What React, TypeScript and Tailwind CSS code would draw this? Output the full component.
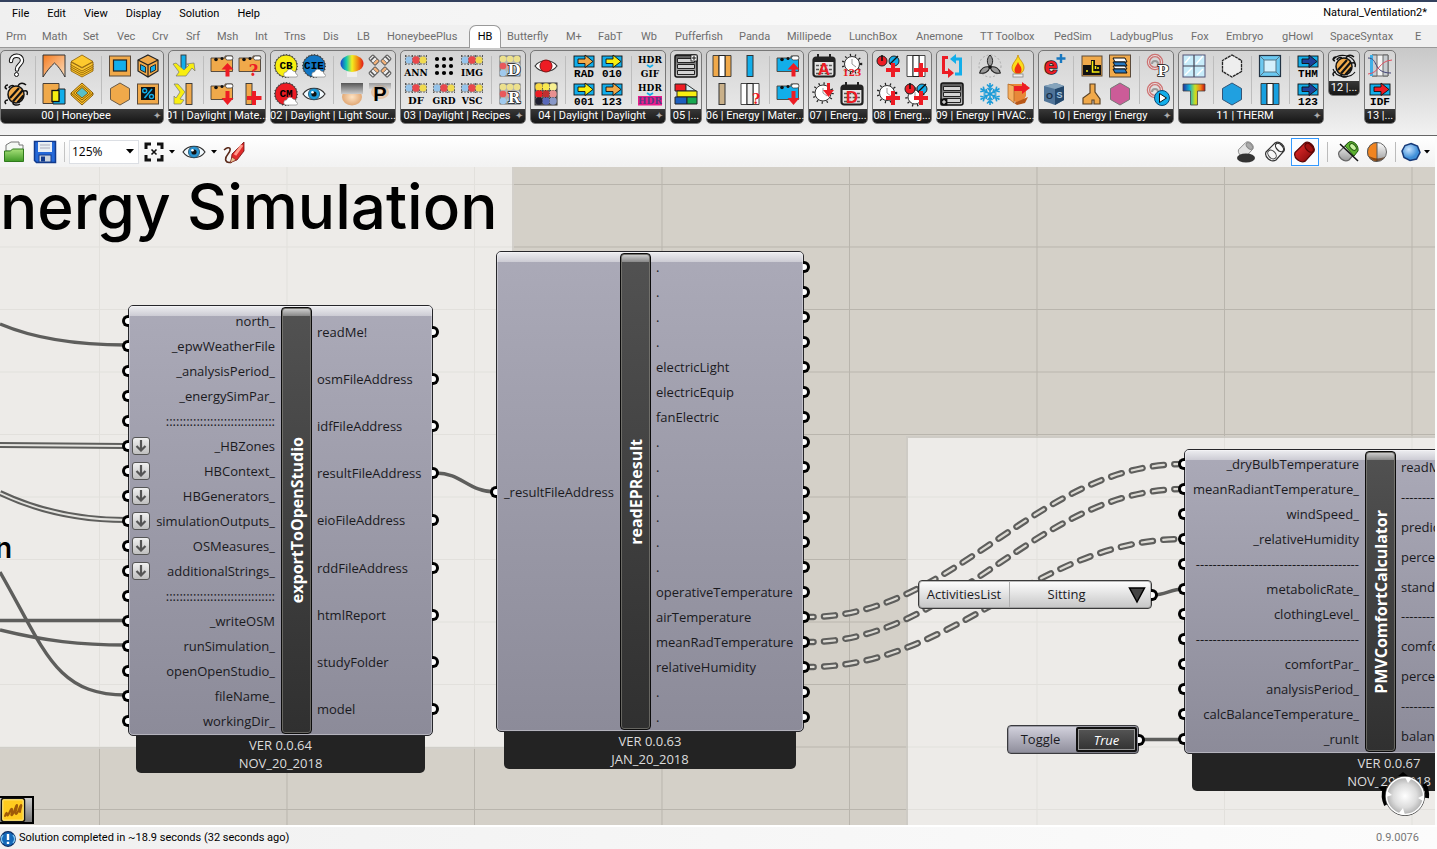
import React from "react";

const ORANGE = "#f0a94a";
const BLUE = "#12aeea";
const RED = "#ed1c24";
const YELLOW = "#f8ee10";
const SERIF = "'DejaVu Serif', serif";
const MONO = "'Liberation Mono', monospace";
const SANS = "'Liberation Sans', sans-serif";

function T({ x = 12, y, s = 9, fill = "#000", children, stroke, anchor = "middle", font = SERIF }: any) {
  return (
    <text x={x} y={y} fontSize={s} fontWeight="bold" fontFamily={font} textAnchor={anchor} fill={fill} stroke={stroke} strokeWidth={stroke ? 1.6 : undefined} paintOrder="stroke">
      {children}
    </text>
  );
}

function Defs() {
  return (
    <svg width="0" height="0" className="absolute" aria-hidden="true">
      <defs>
        <linearGradient id="rainbow">
          <stop offset="0" stopColor="#1a3fd0" /><stop offset=".25" stopColor="#10c8b0" /><stop offset=".5" stopColor="#f4ee20" /><stop offset=".75" stopColor="#f08a10" /><stop offset="1" stopColor="#e01818" />
        </linearGradient>
        <linearGradient id="therm">
          <stop offset="0" stopColor="#2030a0" /><stop offset=".3" stopColor="#10b0d0" /><stop offset=".55" stopColor="#c8e020" /><stop offset=".8" stopColor="#f48018" /><stop offset="1" stopColor="#c01010" />
        </linearGradient>
        <linearGradient id="steel" x2="0" y2="1">
          <stop offset="0" stopColor="#555" /><stop offset="1" stopColor="#ccc" />
        </linearGradient>
        <linearGradient id="grey" x2="0" y2="1">
          <stop offset="0" stopColor="#fff" /><stop offset="1" stopColor="#9a9a9a" />
        </linearGradient>
        <linearGradient id="orangeG" x2="1" y2="1">
          <stop offset="0" stopColor="#f47b20" /><stop offset="1" stopColor="#fde0c0" />
        </linearGradient>
        <linearGradient id="redG" x2="1" y2="1">
          <stop offset="0" stopColor="#f03030" /><stop offset="1" stopColor="#7a0606" />
        </linearGradient>
        <linearGradient id="greenG" x2="0" y2="1">
          <stop offset="0" stopColor="#a8e07a" /><stop offset="1" stopColor="#3f9a26" />
        </linearGradient>
        <radialGradient id="skin"><stop offset="0" stopColor="#fde3c4" /><stop offset="1" stopColor="#e2a976" /></radialGradient>
        <radialGradient id="ball" cx=".38" cy=".35"><stop offset="0" stopColor="#c8e4ff" /><stop offset="1" stopColor="#3f8fd8" /></radialGradient>
        <radialGradient id="dial"><stop offset="0" stopColor="#fff" /><stop offset=".6" stopColor="#dcdcdc" /><stop offset="1" stopColor="#aaa" /></radialGradient>
      </defs>
    </svg>
  );
}

const Cloud = () => <path d="M12 23a2.500 2.500 0 0 1 .5-5 3.500 3.500 0 0 1 6.500-1 3 3 0 0 1 3 3 1.500 1.500 0 0 1 0 3z" fill="#fff" stroke="#777" strokeWidth=".6" />;

function Disc({ fill, label, s = 11 }: { fill: string; label: string; s?: number }) {
  return (
    <>
      <circle cx="12" cy="12" r="11" fill={fill} stroke="#333" strokeWidth=".8" />
      <circle cx="12" cy="12" r="11.500" fill="none" stroke="#222" strokeWidth="1" strokeDasharray="1 2" />
      <Cloud />
      <T y="15" s={s} font={MONO}>{label}</T>
    </>
  );
}

function Sensors({ label }: { label?: string }) {
  return (
    <>
      <rect x="1.500" y="2" width="21" height="8" fill="#b8b8b8" />
      <path d="M1 2h22M1 10h22M1.500 1v10M8.500 1v10M15.500 1v10M22.500 1v10" stroke="#444" strokeWidth=".8" strokeDasharray="2 1" />
      <circle cx="5" cy="6" r="3.500" fill="#96c4ea" /><circle cx="12" cy="6" r="3.700" fill="#e8484c" /><circle cx="19" cy="6" r="3.500" fill="#f0da50" />
      {label && <T y="21.500" s={label.length > 2 ? 9 : 10}>{label}</T>}
    </>
  );
}

function Letters({ label }: { label: string }) {
  return (
    <>
      <rect x="2" y="2" width="20" height="20" fill="#b4b4b0" stroke="#444" strokeWidth=".8" />
      {[5, 12, 19].map((x, i) => (
        <g key={x}>
          <circle cx={x} cy="5" r="3.300" fill="#ece08c" />
          <circle cx={x} cy="12" r="3.300" fill={["#e8585c", "#e8a0a0", "#ddd"][i]} />
          <circle cx={x} cy="19" r="3.300" fill="#a0caee" />
        </g>
      ))}
      <T x="16" y="21" s="15" fill="#fff" stroke="#222">{label}</T>
    </>
  );
}

function Flow({ arrow, label, box = BLUE }: { arrow: string; label: string; box?: string }) {
  return (
    <>
      <rect x="2" y="2" width="20" height="11" fill={box} stroke="#111" strokeWidth=".9" />
      <path d="M6 5h7V1l8 6.500-8 6v-4H6z" fill={arrow} stroke="#111" strokeWidth=".9" />
      <T y="22.500" s="11" font={MONO}>{label}</T>
    </>
  );
}

function Card({ fill, children }: { fill: string; children: React.ReactNode }) {
  return (
    <>
      <path d="M1 4h14V2h7.500v15.500H1z" fill={fill} stroke="#4a4036" strokeWidth=".9" />
      <circle cx="6" cy="5.500" r="1.800" fill="#111" /><circle cx="12" cy="4.500" r="1.500" fill="#111" /><rect x="15.500" y="2" width="7.500" height="4" rx="2" fill="#fff" stroke="#333" strokeWidth=".7" />
      {children}
    </>
  );
}

const Up = () => <path d="M15.500 22.500V15.500H11.500l6-6.500 6 6.500h-4v7z" fill={RED} />;
const Down = () => <path d="M15.500 9v7h-4l6 7 6-7h-4V9z" fill={RED} />;
const Plus = () => <path d="M15 9h4v5h5v4h-5v5h-4v-5h-5v-4h5z" fill={RED} />;

function Clock({ r = 8, cx = 11, cy = 11 }: { r?: number; cx?: number; cy?: number }) {
  return (
    <>
      <circle cx={cx} cy={cy} r={r + 1.5} fill="none" stroke="#222" strokeWidth="2.500" strokeDasharray="1.200 3.800" />
      <circle cx={cx} cy={cy} r={r} fill="#fff" stroke="#333" strokeWidth="1" />
      <path d={`M${cx} ${cy}v-5M${cx} ${cy}l4 3`} stroke="#999" strokeWidth="1" />
    </>
  );
}

function Calendar({ label }: { label: string }) {
  return (
    <>
      <rect x="1.500" y="3.500" width="21" height="19" rx="2.500" fill="#e4e4e4" stroke="#222" strokeWidth="2.200" />
      <path d="M2 4h20v4H2z" fill="#222" />
      <path d="M6 0v5M18 0v5" stroke="#222" strokeWidth="2" />
      <path d="M4 11.500h16M4 15.500h16M4 19.500h16" stroke="#555" strokeWidth="1.400" strokeDasharray="3 1.300" />
      <T y="20.500" s="17" fill={RED} font={SANS}>{label}</T>
    </>
  );
}

function List({ corner }: { corner: "tr" | "bl" }) {
  const top = corner === "tr";
  return (
    <>
      <rect x="1" y="1" width="22" height="22" rx="2" fill="url(#steel)" stroke="#111" strokeWidth="1.500" />
      <path d="M3.500 4.500h17v4h-17zM3.500 10.500h17v4h-17zM3.500 16.500h17v4h-17z" fill="#d4d4d4" stroke="#222" strokeWidth="1" />
      <rect x={top ? 17 : 1} y={top ? 1 : 17} width="6" height="6" fill={top ? "#fff" : "#111"} stroke="#111" strokeWidth=".8" />
      <path d={top ? "M20 2v4M18 4h4" : "M4 18v4M2 20h4"} stroke={top ? "#111" : "#fff"} />
    </>
  );
}

function Bee() {
  return (
    <>
      <ellipse cx="12" cy="12.500" rx="8" ry="8.500" fill={ORANGE} stroke="#111" strokeWidth="1.500" />
      <path d="M6 16l9-10M9 19.500L19 8M13.500 20.500l6-7" stroke="#111" strokeWidth="2.200" />
      <path d="M14 4c2-4 6-3 8-1M20 9c3-1 4 1 3 4M4 18c-3 0-4 2-2 4M9 21c0 2 4 3 7 1M3 7C0 6 1 3 4 3M5 6c0-2 3-3 5-2" fill="none" stroke="#111" strokeWidth="1.500" />
    </>
  );
}

const Eye = ({ iris }: { iris: string }) => (
  <>
    <path d="M1 12c5-7.500 17-7.500 22 0-5 7.500-17 7.500-22 0z" fill="#f4fbff" stroke="#333" strokeWidth="1.200" />
    <circle cx="12" cy="12" r="5.600" fill={iris} stroke="#24506a" strokeWidth=".8" /><circle cx="12" cy="12" r="2.600" fill="#111" /><circle cx="10.500" cy="10.300" r="1.300" fill="#fff" />
  </>
);

const HEX = "M12 1l9.500 5.500v11L12 23l-9.500-5.500v-11z";

const Swirl = () => (
  <>
    <circle cx="9" cy="8" r="6.500" fill="none" stroke="#c85050" strokeWidth="3.500" opacity=".75" />
    <circle cx="9" cy="8" r="6.500" fill="none" stroke="#e8e0e0" strokeWidth="1" /><path d="M6 10c0-4 6-4 6 0" fill="none" stroke="#999" strokeWidth="2" />
  </>
);

const Duo = () => (
  <>
    <circle cx="6" cy="7" r="5" fill={RED} stroke="#222" strokeWidth="1" /><path d="M6 1v6" stroke="#111" strokeWidth="1.500" />
    <circle cx="18" cy="7" r="5" fill={BLUE} stroke="#222" strokeWidth="1" /><path d="M14 10l8-8" stroke="#111" strokeWidth="1.200" />
  </>
);

const Columns = ({ a, b }: { a: string; b: string }) => (
  <>
    <path d="M3 1.500h6v21H3zM15 1.500h6v21h-6z" fill={a} stroke="#333" strokeWidth=".9" />
    <path d="M9 1.500h6v21H9z" fill={b} stroke="#222" strokeWidth="1" />
  </>
);

const icons: Record<string, React.ReactNode> = {
  Info: <><path d="M7 7c0-7 11-7 11-.5 0 4-5 4.500-5 9" fill="none" stroke="#111" strokeWidth="4.400" strokeLinecap="round" /><path d="M7 7c0-7 11-7 11-.5 0 4-5 4.500-5 9" fill="none" stroke="#fff" strokeWidth="2.400" strokeLinecap="round" /><circle cx="12.500" cy="20.500" r="2" fill="#fff" stroke="#111" /></>,
  Bee: <Bee />,
  Mass: <path d="M1 1h22v22C19 16 16 12 12.500 9 8 13 5 17 1 23z" fill="url(#orangeG)" stroke="#333" />,
  Zones: <><path d="M1 1.500h16v8h-6v12H1z" fill={ORANGE} stroke="#4a4036" /><path d="M16 7h7v15H11v-4h6V11h-1z" fill={BLUE} stroke="#222" /><rect x="10" y="8.500" width="7" height="11" fill={YELLOW} stroke="#111" strokeWidth="1.300" /></>,
  Floors: <>{[5, 3, 1, -1].map((o) => <path key={o} d={`M1 ${9 + o}l11 6 11-6v3l-11 6-11-6z`} fill="#f9c531" stroke="#8a5a00" strokeWidth=".8" />)}<path d="M1 7.500L12 1l11 6.500-11 6z" fill="#fdc92e" stroke="#8a5a00" strokeWidth=".8" /></>,
  Core: <><path d="M1 11L12 1l11 10v2L12 23 1 13z" fill="#fbbf28" stroke="#7a5000" strokeWidth=".9" /><path d="M1 11l11 9.500L23 11M3.500 11L12 3.500l8.500 7.500L12 18z" fill="none" stroke="#7a5000" strokeWidth=".9" /><path d="M6 11l6-5.500 6 5.500-6 5z" fill="#58c0c8" stroke="#7a5000" strokeWidth=".9" /></>,
  Glazing: <><rect x="1.500" y="2" width="21" height="20" fill={ORANGE} stroke="#5a4a3a" /><rect x="5.500" y="6" width="13" height="11" fill={BLUE} stroke="#222" strokeWidth="1.200" /></>,
  Surface: <path d={HEX} fill={ORANGE} stroke="#6a5a46" />,
  Zone: <><path d="M12 1l10 5v11l-10 6-10-6V6z" fill={ORANGE} stroke="#222" strokeWidth="1.200" /><path d="M2 6l10 5 10-5M12 11v12" fill="none" stroke="#222" strokeWidth="1.200" /><path d="M4.500 10.500l5 2.500v5.500l-5-2.500zM19.500 10.500l-5 2.500v5.500l5-2.500z" fill={BLUE} stroke="#222" strokeWidth=".9" /></>,
  Ratio: <><rect x="1.500" y="2" width="21" height="20" fill={ORANGE} stroke="#5a4a3a" /><rect x="5" y="5" width="14" height="13" fill="#111" /><path d="M8.500 16l7.500-9" stroke={BLUE} strokeWidth="1.600" /><circle cx="8.700" cy="8.700" r="2" fill="none" stroke={BLUE} strokeWidth="1.400" /><circle cx="15.500" cy="14.500" r="2" fill="none" stroke={BLUE} strokeWidth="1.400" /></>,
  Decompose: <><rect x="9" y="1" width="5" height="18" fill={BLUE} stroke="#333" strokeWidth=".9" /><path d="M1 10l3-1 8 7 5-5-3-1 8-1 1 8-3-3-6 8H4l3-4z" fill={YELLOW} stroke="#777" strokeWidth=".7" /></>,
  Bend: <><rect x="14" y="1.500" width="6" height="21" fill={ORANGE} stroke="#333" strokeWidth=".9" /><path d="M2 2h4l7 8-5 7 4 1-3 4H2v-8l2 2 4-6z" fill={YELLOW} stroke="#777" strokeWidth=".7" /></>,
  "Export material": <Card fill={ORANGE}><Up /></Card>,
  "Import material": <Card fill={ORANGE}><Down /></Card>,
  "Find material": <Card fill={ORANGE}><T x="15.500" y="22" s="16" fill={RED}>?</T></Card>,
  "Add material": <><rect x="8" y="1.500" width="6" height="21" fill={ORANGE} stroke="#333" strokeWidth=".9" /><path d="M14 9h4v5h5.500v4H18v5h-4v-5H9v-4h5z" fill={RED} /></>,
  CB: <Disc fill={YELLOW} label="CB" />,
  CM: <Disc fill={RED} label="CM" />,
  CIE: <Disc fill="#1176c4" label="CIE" />,
  View: <Eye iris="#1c9ad8" />,
  Dome: <><path d="M7 17h10v6H7z" fill="#eee" /><ellipse cx="12" cy="9.500" rx="11.500" ry="8.500" fill="url(#rainbow)" /></>,
  Sky: <><ellipse cx="12" cy="15" rx="10" ry="8.500" fill="url(#skin)" /><rect x="1" y="1" width="22" height="11" fill="url(#steel)" /></>,
  Lamps: <>{[45, 135, 225, 315].map((a) => <g key={a} transform={`rotate(${a} 12 12)`}><rect x="9" y="-1" width="6" height="9" rx="1" fill="#eee" stroke="#555" /><rect x="9" y="5" width="6" height="3" rx="1" fill="#f3b27a" stroke="#555" strokeWidth=".7" /><path d="M9 1.500h6" stroke="#555" strokeWidth="1.600" /></g>)}</>,
  Photometric: <><ellipse cx="12" cy="10" rx="9" ry="7" fill="url(#skin)" opacity=".6" /><rect x="1" y="1" width="22" height="6" fill="url(#steel)" opacity=".5" /><T y="19" s="20" font={SANS}>P</T></>,
  ANN: <Sensors label="ANN" />, DF: <Sensors label="DF" />, GRD: <Sensors label="GRD" />, IMG: <Sensors label="IMG" />, VSC: <Sensors label="VSC" />,
  Points: <>{[5, 12, 19].map((x) => [5, 12, 19].map((y) => <circle key={`${x}-${y}`} cx={x} cy={y} r="2.100" />))}</>,
  D: <Letters label="D" />, R: <Letters label="R" />,
  "Run daylight": <><path d="M1 12c5-7 17-7 22 0-5 7-17 7-22 0z" fill="#fff" stroke="#333" strokeWidth="1.200" /><circle cx="12" cy="12" r="6" fill={RED} stroke="#811" /></>,
  Results: <><rect x="1" y="1" width="22" height="22" fill="#777" stroke="#333" />{["#f8d840", "#f8e850", "#f8f090", "#ed1c24", "#c03030", "#e89090", "#202030", "#5868b8", "#8898c8"].map((c, i) => <circle key={i} cx={5 + (i % 3) * 7} cy={5 + Math.floor(i / 3) * 7} r="3.700" fill={c} />)}<path d="M1 8.500h22M1 15.500h22M8.500 1v22M15.500 1v22" stroke="#222" strokeWidth=".6" strokeDasharray="1 1.500" /></>,
  RAD: <Flow arrow={ORANGE} label="RAD" />, "001": <Flow arrow={YELLOW} label="001" />, "010": <Flow arrow={YELLOW} label="010" />, "123": <Flow arrow={ORANGE} label="123" />,
  "HDR to GIF": <><T y="9" s="9">HDR</T><path d="M9 11l3 2 3-2" stroke={BLUE} strokeWidth="1.800" fill="none" /><T y="22.500" s="9">GIF</T></>,
  "False color": <><T y="9" s="9">HDR</T><path d="M9 11l3 2 3-2" stroke={BLUE} strokeWidth="1.800" fill="none" /><rect x="0" y="14" width="24" height="9.500" fill="#ec1c8c" /><T y="22" s="9" fill="#5a3a80">HDR</T></>,
  Library: <List corner="tr" />,
  Types: <><path d="M1 2h11v7H1z" fill={RED} stroke="#222" /><path d="M12 2l10 7H12z" fill="#d8eef4" stroke="#333" /><path d="M3 9h20v6H3z" fill={YELLOW} stroke="#222" /><path d="M1 15h12v7H1z" fill="#1c5fc0" stroke="#222" /><path d="M13 15h10v7H13z" fill="#18a850" stroke="#222" /></>,
  Construction: <Columns a={ORANGE} b="#fff" />,
  "Air gap": <rect x="9" y="1.500" width="6" height="21" fill="#c9b089" stroke="#333" />,
  Window: <rect x="9" y="1.500" width="6" height="21" fill={BLUE} stroke="#333" />,
  Search: <><Columns a="#fff" b="#f0f0f0" /><T x="18" y="22" s="14" fill={RED}>?</T></>,
  "Export construction": <Card fill={BLUE}><Up /></Card>, "Import construction": <Card fill={BLUE}><Down /></Card>,
  Annual: <Calendar label="A" />, Daily: <Calendar label="D" />,
  Values: <><Clock r={7.5} cx={12} cy={10} /><T y="21.500" s="9" fill={RED}>123</T></>,
  "Pick time": <><Clock /><path d="M15 1h3v7h4l-5.500 7L11 8h4z" fill={RED} /></>,
  Loads: <><Duo /><Plus /></>, Schedule: <><Clock r={7.5} /><Plus /></>, Assembly: <><Columns a="#fff" b="#fff" /><Plus /></>, "Load schedule": <><Clock r={7} cx={11} cy={15} /><Duo /><Plus /></>,
  Loop: <><path d="M8 3.500H3.500v15H10" fill="none" stroke={RED} strokeWidth="3" /><path d="M8 14l6 5-6 5z" fill={RED} /><path d="M15 20h5.500V5H14" fill="none" stroke={BLUE} strokeWidth="3" /><path d="M16 0l-6 5 6 5z" fill={BLUE} /></>,
  Systems: <List corner="bl" />,
  Fan: <><circle cx="12" cy="12" r="11" fill="none" stroke="#aaa" strokeDasharray="2 2" />{[0, 120, 240].map((a) => <path key={a} transform={`rotate(${a} 12 13)`} d="M12 13c-4-4-3-9 0-12 3 3 4 8 0 12z" fill="#999" stroke="#222" />)}<circle cx="12" cy="13" r="1.800" fill="#111" /></>,
  Cooling: <g stroke="#1e9cd8" strokeWidth="1.600" fill="none">{[0, 60, 120, 180, 240, 300].map((a) => <path key={a} transform={`rotate(${a} 12 12)`} d="M12 12V1M9 2.500l3 3 3-3M9.500 6l2.500 2.500L14.500 6" />)}</g>,
  Heating: <><path d="M12 1c1 5 6 7 6 13a6 6 0 0 1-12 0c0-5 5-8 6-13z" fill="#fbdc1c" stroke="#c88a00" strokeWidth=".8" /><path d="M12 8c1 3 3.500 4 3.500 8a3.500 3.500 0 0 1-7 0c0-3 2.500-5 3.500-8z" fill="#f03010" /><rect x="7" y="20" width="10" height="3" fill="#eee" stroke="#888" strokeWidth=".8" /></>,
  Exhaust: <><path d="M2 2h18v12l-5 8-13-5z" fill="#e88838" /><path d="M2 2l6 2v17l-6-5z" fill="#f5b060" stroke="#a86020" strokeWidth=".7" /><path d="M8 4h8V0l8 6-8 6V9H8z" fill={RED} /><path d="M8 21l14-6-3 6-8 2z" fill="#b85818" /></>,
  EnergyPlus: <><T x="9" y="20" s="24" fill={RED} stroke="#222" font={SANS}>e</T><path d="M19 0v9M14.500 4.500h9" stroke="#1878c0" strokeWidth="2.400" /></>,
  OpenStudio: <><path d="M2 4l12-3 8 3v14l-9 5-11-4z" fill="#507498" /><path d="M13 7l9-3v14l-9 5z" fill="#24486c" /><path d="M2 4l12-3 8 3-9 3z" fill="#86a4bc" /><T x="7.500" y="17" s="9" fill="#182c44" font={SANS}>O</T><T x="17.500" y="16" s="9" fill="#a8c8e0" font={SANS}>S</T></>,
  Chart: <><rect x="2" y="2" width="20" height="20" fill={ORANGE} stroke="#5a4a3a" /><path d="M3 11h8V6h4v5h6v10H3z" fill="#111" /><path d="M12.500 7v11h7M7 16v2M15.500 12v3M18 13v2" stroke={YELLOW} strokeWidth="1.500" fill="none" /></>,
  Generator: <path d="M10 2h5v8l5 7v5h-6v-4h-2v4H3v-6l7-5z" fill={ORANGE} stroke="#5a4226" strokeWidth="1.200" />,
  Report: <><rect x="1.500" y="1" width="21" height="22" fill={ORANGE} stroke="#5a4a3a" /><path d="M5 4h12l2 4H7z" fill="#fff" stroke="#111" /><path d="M5 8h12l2 4H7z" fill="#2878c0" stroke="#111" /><path d="M5 12h12l2 3H7z" fill="#fff" stroke="#111" /><path d="M5 15h12l2 4H7z" fill="#2878c0" stroke="#111" /></>,
  Context: <path d={HEX} fill="#cc5c98" stroke="#777" />,
  Parameters: <><Swirl /><T x="17" y="22" s="15" fill="#fff" stroke="#111">P</T></>,
  Run: <><Swirl /><circle cx="16" cy="16" r="7.500" fill={BLUE} stroke="#0a4a78" /><path d="M13.500 11.500l7 4.500-7 4.500z" fill="#fff" stroke="#111" /></>,
  "Window grid": <><rect x="1" y="1" width="22" height="22" fill="#c8ecfa" stroke="#557" /><path d="M12 1v22M1 12h22" stroke="#445" strokeWidth="1.200" /><path d="M3 9l5-6M14 10l7-8M3 21l7-7M15 21l6-6" stroke="#fff" strokeWidth="1.400" /></>,
  Thermal: <path d="M1 2h22v7h-7.500v14h-7V9H1z" fill="url(#therm)" stroke="#444" strokeWidth=".8" />,
  Polygon: <path d={HEX} fill="#eee" stroke="#222" strokeWidth="1.300" strokeDasharray="3 .6" />,
  Material: <path d={HEX} fill="#20a0e0" stroke="#357" />,
  Frame: <><rect x="1.500" y="1.500" width="21" height="21" fill="#6cc8f0" stroke="#234" strokeWidth="1.200" /><rect x="6" y="6" width="12" height="12" fill="#d4f0fc" stroke="#578" /><path d="M2 2l4 4M22 2l-4 4M2 22l4-4M22 22l-4-4" stroke="#578" /></>,
  Spacer: <Columns a="#18a0e0" b="#fff" />,
  THM: <Flow arrow="#1c3f98" label="THM" />, "THM results": <Flow arrow="#1c3f98" label="123" />,
  Legacy: <><Bee /><path d="M1 6C6-1 20 0 23 9M23 18C18 25 4 24 1 15" fill="none" stroke="#111" strokeWidth="1.100" /></>,
  Compare: <><path d="M4 1h16v21H4z" fill="#f4f4f4" stroke="#666" /><path d="M4 1h5v21H4zM15 1h5v21h-5z" fill="#c8ccd0" stroke="#666" /><rect x="2" y="1" width="3" height="21" fill="#40b0e8" /><path d="M0 4c11 0 4 15 23 15" stroke="#447" fill="none" /><path d="M0 20c12-1 10-13 24-14" stroke="#e05060" fill="none" /></>,
  IDF: <Flow arrow={RED} label="IDF" />,
};

type Panel = { label: string; more?: boolean; groups: string[][][] };

const panels: Panel[] = [
  { label: "00 | Honeybee", more: true, groups: [[["Info", "Bee"]], [["Mass", "Zones"], ["Floors", "Core"]], [["Glazing", "Surface"], ["Zone", "Ratio"]]] },
  { label: "01 | Daylight | Mate...", groups: [[["Decompose", "Bend"]], [["Export material", "Import material"], ["Find material", "Add material"]]] },
  { label: "02 | Daylight | Light Sour...", groups: [[["CB", "CM"], ["CIE", "View"]], [["Dome", "Sky"], ["Lamps", "Photometric"]]] },
  { label: "03 | Daylight | Recipes", more: true, groups: [[["ANN", "DF"], ["Points", "GRD"], ["IMG", "VSC"]], [["D", "R"]]] },
  { label: "04 | Daylight | Daylight", more: true, groups: [[["Run daylight", "Results"]], [["RAD", "001"], ["010", "123"]], [["HDR to GIF", "False color"]]] },
  { label: "05 |...", groups: [[["Library", "Types"]]] },
  { label: "06 | Energy | Mater...", groups: [[["Construction", "Air gap"], ["Window", "Search"]], [["Export construction", "Import construction"]]] },
  { label: "07 | Energ...", groups: [[["Annual", "Pick time"], ["Values", "Daily"]]] },
  { label: "08 | Energ...", groups: [[["Loads", "Schedule"], ["Assembly", "Load schedule"]]] },
  { label: "09 | Energy | HVAC...", groups: [[["Loop", "Systems"]], [["Fan", "Cooling"], ["Heating", "Exhaust"]]] },
  { label: "10 | Energy | Energy", more: true, groups: [[["EnergyPlus", "OpenStudio"]], [["Chart", "Generator"], ["Report", "Context"]], [["Parameters", "Run"]]] },
  { label: "11 | THERM", more: true, groups: [[["Window grid", "Thermal"]], [["Polygon", "Material"]], [["Frame", "Spacer"]], [["THM", "THM results"]]] },
  { label: "12 |...", groups: [[["Legacy"]]] },
  { label: "13 |...", groups: [[["Compare", "IDF"]]] },
];

const tabs: [string, string][] = [
  ["Prm", "w-[36px]"], ["Math", "w-[41px]"], ["Set", "w-[34px]"], ["Vec", "w-[35px]"], ["Crv", "w-[34px]"], ["Srf", "w-[31px]"], ["Msh", "w-[38px]"], ["Int", "w-[29px]"], ["Trns", "w-[39px]"], ["Dis", "w-[34px]"], ["LB", "w-[30px]"], ["HoneybeePlus", "w-[88px]"],
  ["HB", "w-[32px]"], ["Butterfly", "w-[59px]"], ["M+", "w-[32px]"], ["FabT", "w-[43px]"], ["Wb", "w-[34px]"], ["Pufferfish", "w-[64px]"], ["Panda", "w-[48px]"], ["Millipede", "w-[62px]"], ["LunchBox", "w-[67px]"], ["Anemone", "w-[64px]"], ["TT Toolbox", "w-[74px]"], ["PedSim", "w-[56px]"],
  ["LadybugPlus", "w-[81px]"], ["Fox", "w-[35px]"], ["Embryo", "w-[56px]"], ["gHowl", "w-[48px]"], ["SpaceSyntax", "w-[85px]"], ["E", "w-[22px]"],
];

function RibbonPanel({ label, more, groups }: Panel) {
  return (
    <section className="flex shrink-0 flex-col rounded-[5px] border border-[#777] bg-linear-to-b from-[#d4d4d4] to-[#ececec]">
      <div className="flex p-px">
        {groups.map((cols, g) => (
          <React.Fragment key={g}>
            {g > 0 && <div className="my-1 flex w-[10px] justify-center"><div className="w-px bg-[#bdbdbd]" /></div>}
            {cols.map((col) => (
              <div key={col[0]} className="flex w-7 flex-col">
                {col.map((name) => (
                  <button key={name} aria-label={name} className="flex h-7 w-7 items-center justify-center">
                    <svg viewBox="0 0 24 24" className="h-6 w-6 overflow-visible">{icons[name]}</svg>
                  </button>
                ))}
              </div>
            ))}
          </React.Fragment>
        ))}
      </div>
      <div className="relative flex h-[14px] items-center justify-center rounded-b-[4px] bg-linear-to-b from-[#383838] to-[#161616] text-[11px] leading-[14px] whitespace-nowrap text-white">
        <span className={more ? "w-0 flex-1 text-center" : "flex w-0 justify-center"}>{label}</span>
        {more && <span className="w-3 text-center text-[10px] text-[#aaa]">✦</span>}
      </div>
    </section>
  );
}

const Tri = () => (
  <svg viewBox="0 0 6 4" className="h-1 w-1.5"><path d="M0 0h6L3 3.500z" /></svg>
);

function Cylinder({ fill, stroke, hole }: { fill: string; stroke: string; hole: string }) {
  return (
    <g stroke={stroke} strokeWidth="1.200">
      <path d="M2 12L11 3c4-3 11 3 9 8l-8 9c-5 3-12-3-10-8z" fill={fill} />
      <ellipse cx="15.500" cy="7.500" rx="3" ry="5" transform="rotate(-42 15.500 7.500)" fill={hole} />
    </g>
  );
}

function Tool({ label, children, className = "w-6" }: { label: string; children: React.ReactNode; className?: string }) {
  return (
    <button aria-label={label} className={`flex h-7 items-center justify-center ${className}`}>
      <svg viewBox="0 0 24 24" className="h-6 w-6 shrink-0">{children}</svg>
    </button>
  );
}

function Toolbar() {
  return (
    <div className="mr-[2px] flex h-[31px] shrink-0 items-center justify-between bg-linear-to-b from-white to-[#f2f2f2] pr-[2px] pl-[3px]">
      <div className="flex items-center">
        <Tool label="Open">
          <path d="M3 11V5l5-3h8v3h4v7z" fill="#f4f8f4" stroke="#777" />
          <path d="M1.500 11h6l2-2h11v12.500h-19z" fill="url(#greenG)" stroke="#2f7a1c" />
        </Tool>
        <Tool label="Save" className="ml-[6px] w-6">
          <path d="M1.500 1.500h21v21h-19l-2-2z" fill="#2468d8" stroke="#123a8c" strokeWidth="1.500" />
          <rect x="5" y="2" width="14" height="10" fill="#e8eef4" /><path d="M7 5h10M7 8h10" stroke="#aab" /><rect x="6" y="15" width="12" height="7" fill="#ccd4dc" stroke="#123a8c" /><rect x="8" y="16.500" width="4" height="5" fill="#123a8c" />
        </Tool>
        <div className="ml-[7px] h-[20px] w-px bg-[#c4c4c4]" />
        <div className="relative ml-[4px] flex items-center">
          <select aria-label="Zoom" defaultValue="125%" className="h-6 w-[70px] appearance-none border border-[#dcdfe4] bg-white pl-[2px] font-['Open_Sans',sans-serif] text-[12px] text-black">
            <option>125%</option>
          </select>
          <span className="pointer-events-none absolute right-[5px]"><svg viewBox="0 0 8 5" className="h-[5px] w-2"><path d="M0 0h8L4 4.500z" /></svg></span>
        </div>
        <Tool label="Zoom extents" className="ml-[3px] w-6">
          <path d="M4 9V4h5M15 4h5v5M20 15v5h-5M9 20H4v-5" fill="none" stroke="#111" strokeWidth="3" /><path d="M9.500 9.500l5 5M14.500 9.500l-5 5" stroke="#111" strokeWidth="1.600" />
        </Tool>
        <button aria-label="Zoom options" className="flex w-3 justify-center"><Tri /></button>
        <Tool label="Preview" className="ml-1 w-6"><Eye iris="#2a94d0" /></Tool>
        <button aria-label="Preview options" className="ml-[2px] flex w-3 justify-center"><Tri /></button>
        <Tool label="Sketch" className="ml-[2px] w-6">
          <path d="M2 10c6-5 8-1 4 4-4 5-3 10 4 8" fill="none" stroke="#5a2a1a" strokeWidth="1.600" /><path d="M22 2v9l-7 9-6 2 1-8z" fill="#e02a2a" stroke="#701010" strokeWidth=".8" /><path d="M20 5l-7 10" stroke="#ff9a8a" strokeWidth="3" /><path d="M8 23l2-6 4 3z" fill="#e8c090" stroke="#701010" strokeWidth=".5" />
        </Tool>
      </div>
      <div className="flex items-center">
        <Tool label="No preview"><g transform="translate(3 0) scale(.8)"><Cylinder fill="#e4e4e4" stroke="#888" hole="#aaa" /></g><ellipse cx="12" cy="18" rx="9" ry="4.500" fill="#333" /></Tool>
        <Tool label="Wireframe preview" className="ml-1 w-7"><Cylinder fill="none" stroke="#333" hole="none" /><ellipse cx="8" cy="14.500" rx="3.500" ry="5" transform="rotate(-42 8 14.500)" fill="none" stroke="#444" /></Tool>
        <button aria-label="Shaded preview" className="ml-px flex h-7 w-7 items-center justify-center border border-[#3399ff] bg-[#fafcff]"><svg viewBox="0 0 23 23" className="h-6 w-6"><Cylinder fill="url(#redG)" stroke="#5a0505" hole="#a01010" /></svg></button>
        <div className="ml-[8px] h-5 w-px bg-[#bbb]" />
        <Tool label="Selected preview" className="ml-[9px] w-6"><Cylinder fill="url(#grey)" stroke="#666" hole="#2f7a1c" /><path d="M8 6l4-4c5-2 10 4 9 9l-4 5z" fill="#5cb030" stroke="#235c10" /><ellipse cx="16" cy="7" rx="2.500" ry="4" transform="rotate(-42 16 7)" fill="#c8f0a0" stroke="#235c10" /><path d="M3 4l18 17" stroke="#111" strokeWidth="1.500" /></Tool>
        <Tool label="Document preview" className="ml-1 w-6"><circle cx="12" cy="12" r="9.500" fill="url(#grey)" stroke="#666" /><path d="M12 2.500a9.500 9.500 0 0 0 0 19z" fill="#f08420" stroke="#555" /><path d="M4 16a9.500 9.500 0 0 0 16 1c-6 2-11 2-16-1z" fill="#5a3010" opacity=".7" /></Tool>
        <div className="ml-[6px] h-5 w-px bg-[#bbb]" />
        <Tool label="Mesh quality" className="ml-[5px] w-5"><path d="M12 3.500l6.500 2.500 2.500 6.500-3.500 6.500-6.500 1.500-6-3L3 11l3-5.500z" fill="url(#ball)" stroke="#173a78" strokeWidth="1.500" /></Tool>
        <button aria-label="Mesh options" className="flex w-3 justify-center"><Tri /></button>
      </div>
    </div>
  );
}

const COLONS = "::::::::::::::::::::::::::::::::";
const DASHES = "---------------------------------------";

type NodeProps = {
  title: string;
  place: string;
  inputs: string[];
  outputs: string[];
  arrows?: string[];
  inputClass: string;
  version: string;
  date: string;
};

function GraphNode({ title, place, inputs, outputs, arrows = [], inputClass, version, date }: NodeProps) {
  return (
    <article className={`absolute flex flex-col text-[13px] leading-[18px] text-[#1a1a1e] ${place}`}>
      <div className="relative flex flex-1 rounded-[5px] border border-[#26262a] bg-linear-to-b from-[#abaab8] to-[#8c8b99] p-px ring-1 ring-white/35 ring-inset">
        <div className="absolute inset-x-0 top-0 h-[10px] rounded-t-[4px] bg-linear-to-b from-white/80 to-white/40" />
        <ul className={`relative flex flex-col py-px ${inputClass}`}>
          {inputs.map((name, i) => (
            <li key={i} className="relative flex flex-1 items-center justify-end pr-[6px] whitespace-nowrap">
              <span className="absolute right-full mr-px h-3 w-[7px] rounded-l-full border-[3px] border-r-0 border-black bg-white" />
              {arrows.includes(name) && (
                <button aria-label={`${name} list access`} className="absolute left-[2px] flex h-[18px] w-[18px] items-center justify-center rounded-[3px] border border-[#555] bg-linear-to-b from-[#f0f0f0] to-[#c0c0c0]">
                  <svg viewBox="0 0 12 12" className="h-3 w-3"><path d="M6 0v10M1.500 6L6 10.500 10.500 6" fill="none" stroke="#555" strokeWidth="2.200" /></svg>
                </button>
              )}
              {name}
            </li>
          ))}
        </ul>
        <div className="relative flex w-[31px] shrink-0 items-center justify-center rounded-[4px] border border-[#0c0c0c] bg-linear-to-b from-[#525252] to-[#303030] ring-1 ring-[#8a8880]/60 ring-inset">
          <div className="absolute inset-x-px top-px h-[7px] rounded-t-[2px] bg-linear-to-b from-[#ccc] to-[#888]" />
          <h2 className="rotate-180 text-[16px] leading-[22px] font-bold whitespace-nowrap text-white [writing-mode:vertical-rl]">{title}</h2>
        </div>
        <ul className="relative flex flex-1 flex-col py-px">
          {outputs.map((name, i) => (
            <li key={i} className="relative flex flex-1 items-center pl-[5px] whitespace-nowrap">
              {name}
              <span className="absolute left-full ml-px h-3 w-[7px] rounded-r-full border-[3px] border-l-0 border-black bg-white" />
            </li>
          ))}
        </ul>
      </div>
      <div className="mx-[8px] rounded-b-[5px] bg-[#232323] pb-px text-center text-[#dcdcdc]">
        <div>{version}</div>
        <div>{date}</div>
      </div>
    </article>
  );
}

const dashed = ["M809 617C955 617 1036 464 1184 464", "M809 642C955 642 1036 489 1184 489", "M809 667C955 667 1036 539 1184 539"];
const doubled = ["M0 445L126 446", "M0 493C40 512 80 520 126 520"];
const single = ["M0 324C40 341 85 345 126 345", "M0 620.500H126", "M0 630C45 641 80 645 126 645", "M0 572C45 650 55 695 126 695", "M436 473C462 473 468 492 496 492", "M1153 595C1166 595 1170 589 1184 589", "M1140 739.500H1184"];

function Grid() {
  return (
    <svg className="absolute inset-0 h-full w-full" aria-hidden="true">
      <defs>
        <pattern id="grid" x="99" y="17" width="187.500" height="62.500" patternUnits="userSpaceOnUse">
          <path d="M0 .5H187.500M.5 0V62.500" stroke="#b9b5ad" fill="none" />
        </pattern>
      </defs>
      <rect width="100%" height="100%" fill="url(#grid)" />
    </svg>
  );
}

function Wires() {
  return (
    <svg className="absolute inset-0 h-full w-full" aria-hidden="true">
      <g transform="translate(0 -167)" fill="none" stroke="#5e5e5c">
        {single.map((d) => <path key={d} d={d} strokeWidth="3.400" />)}
        {doubled.map((d) => <g key={d}><path d={d} strokeWidth="6" /><path d={d} stroke="#e4e3df" strokeWidth="1.900" /></g>)}
        {dashed.map((d) => (
          <g key={d} strokeLinecap="round" strokeDasharray="11 10.500" strokeDashoffset="6.500">
            <path d={d} strokeWidth="6.500" /><path d={d} stroke="#dddbd5" strokeWidth="2.200" />
          </g>
        ))}
      </g>
    </svg>
  );
}

function Canvas() {
  return (
    <main className="relative mr-[2px] flex-1 overflow-hidden bg-[#d4d0c8] font-['Open_Sans','Noto_Sans',sans-serif]">
      <Grid />
      <div className="absolute top-0 left-0 h-[582px] w-[514px] border-r-2 border-b-2 border-[#b9b5ad]/50 bg-white/58" />
      <div className="absolute top-[269px] right-0 bottom-0 left-[906px] border-t-2 border-l-2 border-[#b9b5ad]/60 bg-white/58" />
      <Wires />
      <h1 className="absolute top-0 left-0 font-['Inter',sans-serif] text-[62px] leading-[80px] font-medium whitespace-nowrap text-black">nergy Simulation</h1>
      <p className="absolute top-[363px] left-[-5px] font-['Inter',sans-serif] text-[28px] leading-[36px] font-semibold text-black">n</p>

      <GraphNode
        title="exportToOpenStudio"
        place="left-[128px] top-[138px] w-[305px] h-[468px]"
        inputClass="w-[151px]"
        inputs={["north_", "_epwWeatherFile", "_analysisPeriod_", "_energySimPar_", COLONS, "_HBZones", "HBContext_", "HBGenerators_", "simulationOutputs_", "OSMeasures_", "additionalStrings_", COLONS, "_writeOSM", "runSimulation_", "openOpenStudio_", "fileName_", "workingDir_"]}
        arrows={["_HBZones", "HBContext_", "HBGenerators_", "simulationOutputs_", "OSMeasures_", "additionalStrings_"]}
        outputs={["readMe!", "osmFileAddress", "idfFileAddress", "resultFileAddress", "eioFileAddress", "rddFileAddress", "htmlReport", "studyFolder", "model"]}
        version="VER 0.0.64"
        date="NOV_20_2018"
      />
      <GraphNode
        title="readEPResult"
        place="left-[496px] top-[84px] w-[308px] h-[518px]"
        inputClass="w-[122px]"
        inputs={["_resultFileAddress"]}
        outputs={[".", ".", ".", ".", "electricLight", "electricEquip", "fanElectric", ".", ".", ".", ".", ".", ".", "operativeTemperature", "airTemperature", "meanRadTemperature", "relativeHumidity", ".", "."]}
        version="VER 0.0.63"
        date="JAN_20_2018"
      />
      <GraphNode
        title="PMVComfortCalculator"
        place="left-[1184px] top-[282px] w-[410px] h-[342px]"
        inputClass="w-[179px]"
        inputs={["_dryBulbTemperature", "meanRadiantTemperature_", "windSpeed_", "_relativeHumidity", DASHES, "metabolicRate_", "clothingLevel_", DASHES, "comfortPar_", "analysisPeriod_", "calcBalanceTemperature_", "_runIt"]}
        outputs={["readMe!", DASHES, "predictedMeanVote", "percentPeopleDissatisfied", "standardEffectiveTemperature", DASHES, "comfortableOrNot", "percentOfTimeComfortable", DASHES, "balanceTemperature"]}
        version="VER 0.0.67"
        date="NOV_29_2018"
      />

      <div className="absolute top-[413px] left-[918px] flex h-[29px] w-[234px] items-center rounded-[4px] border border-[#3a3a3a] bg-linear-to-b from-white to-[#c6c6c6] text-[13px] text-[#1a1a1e] ring-1 ring-[#8a8a8a]/60 ring-inset">
        <label htmlFor="activity" className="w-[91px] border-r border-[#b0b0b0] text-center leading-[25px]">ActivitiesList</label>
        <select id="activity" defaultValue="Sitting" className="h-full flex-1 appearance-none bg-transparent pr-[28px] text-center">
          <option>Sitting</option>
        </select>
        <svg viewBox="0 0 18 18" className="pointer-events-none absolute right-[5px] h-[18px] w-[18px]"><path d="M1.500 2h15L9 16z" fill="#444" stroke="#000" strokeWidth="1.500" /></svg>
        <span className="absolute left-full h-3 w-[7px] rounded-r-full border-[3px] border-l-0 border-black bg-white" />
      </div>

      <div className="absolute top-[558px] left-[1007px] flex h-[29px] w-[132px] rounded-[4px] border border-[#3a3a3e] bg-linear-to-b from-[#d4d3de] to-[#8e8d9b] p-px text-[13px] ring-1 ring-[#77767f]/60 ring-inset">
        <span className="w-[67px] pr-1 text-center leading-[24px] text-[#1a1a1e]">Toggle</span>
        <button className="flex-1 rounded-[2px] border-2 border-[#111] bg-linear-to-b from-[#555] to-[#333] leading-[20px] text-white italic ring-1 ring-[#999] ring-inset">True</button>
        <span className="absolute top-[8px] left-full h-3 w-[7px] rounded-r-full border-[3px] border-l-0 border-black bg-white" />
      </div>

      <button aria-label="Sketch gallery" className="absolute bottom-px left-0 flex h-7 w-[34px] items-center border-2 border-l-0 border-black bg-linear-to-b from-[#ccc] to-[#777]">
        <svg viewBox="0 0 26 26" className="h-[26px] w-[26px]"><rect x="1.500" y="1.500" width="23" height="23" rx="2" fill="#ffcb1f" stroke="#111" strokeWidth="1.500" /><rect x="2.800" y="2.800" width="20.400" height="20.400" rx="1" fill="none" stroke="#ffec90" /><path d="M5 19c1-4 2-4 2-1 1 3 4-8 5-6s-2 7 0 6 4-11 5-10-3 9-1 9 4-9 5-9-1 5-1 7" fill="none" stroke="#a05a08" strokeWidth="2" strokeLinecap="round" /></svg>
      </button>

      <svg viewBox="0 0 54 50" className="absolute right-[3px] bottom-[5px] h-[50px] w-[54px]" aria-label="Compass">
        <path d="M0 17l9-1-3 7zM20 6l5-4 5 4z" fill="#000" />
        <path d="M7 18a22 22 0 0 0 1 17M46 14a22 22 0 0 1 3 14" fill="none" stroke="#000" strokeWidth="4" />
        <circle cx="27" cy="26" r="19.500" fill="url(#dial)" stroke="#444" />
        <circle cx="27" cy="26" r="18.500" fill="none" stroke="#fff" strokeWidth="1.500" />
        <path d="M27 7l7 1-4 5zM46 25l-1 6-5-3zM27 45l-6-2 4-5zM8 27l1-6 5 4z" fill="#fff" />
      </svg>
    </main>
  );
}

export default function App() {
  return (
    <div className="flex h-screen flex-col overflow-hidden bg-[#fcfcfc] font-['Roboto','Liberation_Sans',sans-serif] text-[11px] text-black">
      <Defs />
      <header className="flex h-[25px] shrink-0 items-center justify-between border-t-2 border-[#33415e] bg-linear-to-r from-[#f0f0f0] to-white pr-[10px] pl-[3px]">
        <nav className="flex">
          {["File", "Edit", "View", "Display", "Solution", "Help"].map((m) => <button key={m} className="px-[9px] leading-[20px]">{m}</button>)}
        </nav>
        <span>Natural_Ventilation2*</span>
      </header>

      <div className="flex h-[23px] shrink-0 items-end overflow-hidden bg-[#f0f0f0] text-[#6e6e6e]" role="tablist">
        {tabs.map(([t, w]) =>
          t === "HB" ? (
            <button key={t} role="tab" aria-selected="true" className={`h-[23px] shrink-0 rounded-t-[7px] border border-b-0 border-[#999] bg-white text-center leading-[20px] text-black ${w}`}>{t}</button>
          ) : (
            <button key={t} role="tab" aria-selected="false" className={`h-[23px] shrink-0 border-b border-[#999] pt-[2px] pl-[6px] text-left leading-[20px] whitespace-nowrap ${w}`}>{t}</button>
          ),
        )}
        <span className="h-[23px] flex-1 border-b border-[#999]" />
      </div>

      <div className="flex h-[88px] shrink-0 items-start gap-1 overflow-hidden border-b border-[#666] bg-linear-to-b from-[#c8c8c8] to-[#f2f2f2] pt-[2px]">
        {panels.map((p) => <RibbonPanel key={p.label} {...p} />)}
      </div>

      <Toolbar />
      <Canvas />

      <footer className="flex h-6 shrink-0 items-center justify-between border-t-2 border-white bg-linear-to-r from-[#f0f0f0] to-[#fcfcfc] pt-px pr-[18px]">
        <div className="flex items-center gap-[3px]">
          <svg viewBox="0 0 16 16" className="h-4 w-4"><circle cx="8" cy="8" r="7.300" fill="#1468b8" stroke="#0a2a60" strokeWidth="1.200" /><path d="M3 4a6 6 0 0 0 0 8M13 4a6 6 0 0 1 0 8" stroke="#7cc4f0" fill="none" strokeWidth="1.500" /><path d="M8 3v6M8 10.800v2.200" stroke="#fff" strokeWidth="2.400" /></svg>
          <span>Solution completed in ~18.9 seconds (32 seconds ago)</span>
        </div>
        <span className="text-[#777]">0.9.0076</span>
      </footer>
    </div>
  );
}
